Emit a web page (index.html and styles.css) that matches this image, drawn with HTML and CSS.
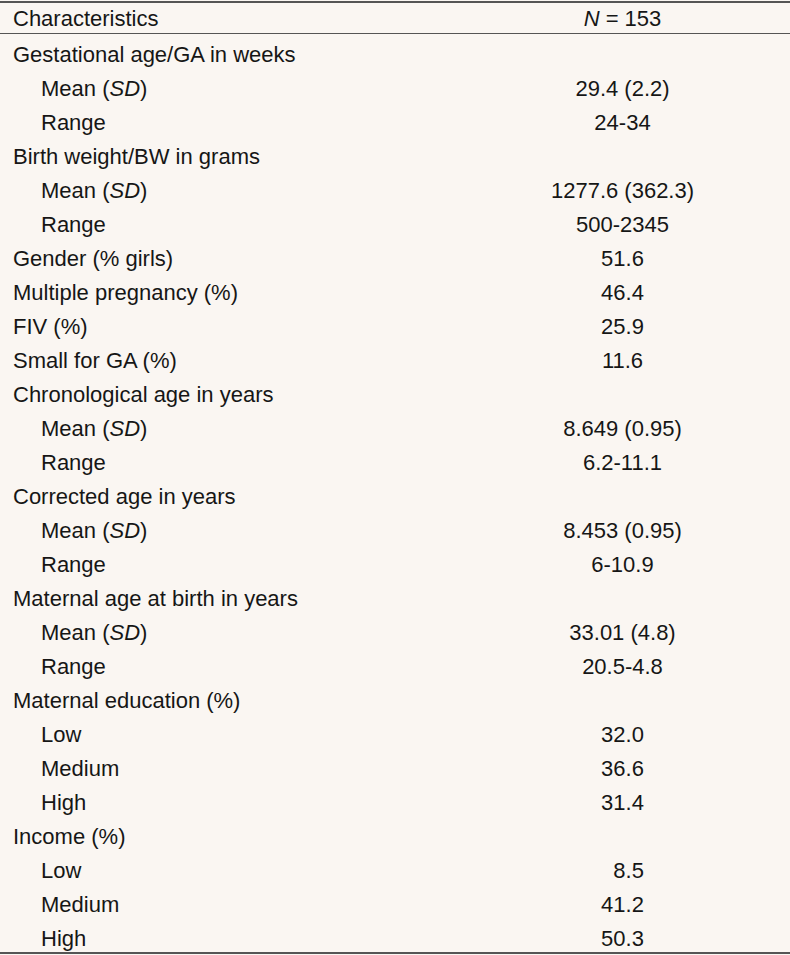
FILE: index.html
```html
<!DOCTYPE html>
<html lang="en">
<head>
<meta charset="utf-8">
<title>Characteristics</title>
<link rel="stylesheet" href="styles.css">
</head>
<body>
<table class="tbl">
  <thead>
    <tr><th class="c1">Characteristics</th><th class="c2"><i>N</i> = 153</th></tr>
  </thead>
  <tbody>
    <tr><td class="c1">Gestational age/GA in weeks</td><td class="c2"></td></tr>
    <tr><td class="c1 ind">Mean (<i>SD</i>)</td><td class="c2">29.4 (2.2)</td></tr>
    <tr><td class="c1 ind">Range</td><td class="c2">24-34</td></tr>
    <tr><td class="c1">Birth weight/BW in grams</td><td class="c2"></td></tr>
    <tr><td class="c1 ind">Mean (<i>SD</i>)</td><td class="c2">1277.6 (362.3)</td></tr>
    <tr><td class="c1 ind">Range</td><td class="c2">500-2345</td></tr>
    <tr><td class="c1">Gender (% girls)</td><td class="c2">51.6</td></tr>
    <tr><td class="c1">Multiple pregnancy (%)</td><td class="c2">46.4</td></tr>
    <tr><td class="c1">FIV (%)</td><td class="c2">25.9</td></tr>
    <tr><td class="c1">Small for GA (%)</td><td class="c2">11.6</td></tr>
    <tr><td class="c1">Chronological age in years</td><td class="c2"></td></tr>
    <tr><td class="c1 ind">Mean (<i>SD</i>)</td><td class="c2">8.649 (0.95)</td></tr>
    <tr><td class="c1 ind">Range</td><td class="c2">6.2-11.1</td></tr>
    <tr><td class="c1">Corrected age in years</td><td class="c2"></td></tr>
    <tr><td class="c1 ind">Mean (<i>SD</i>)</td><td class="c2">8.453 (0.95)</td></tr>
    <tr><td class="c1 ind">Range</td><td class="c2">6-10.9</td></tr>
    <tr><td class="c1">Maternal age at birth in years</td><td class="c2"></td></tr>
    <tr><td class="c1 ind">Mean (<i>SD</i>)</td><td class="c2">33.01 (4.8)</td></tr>
    <tr><td class="c1 ind">Range</td><td class="c2">20.5-4.8</td></tr>
    <tr><td class="c1">Maternal education (%)</td><td class="c2"></td></tr>
    <tr><td class="c1 ind">Low</td><td class="c2">32.0</td></tr>
    <tr><td class="c1 ind">Medium</td><td class="c2">36.6</td></tr>
    <tr><td class="c1 ind">High</td><td class="c2">31.4</td></tr>
    <tr><td class="c1">Income (%)</td><td class="c2"></td></tr>
    <tr><td class="c1 ind">Low</td><td class="c2">&#8199;8.5</td></tr>
    <tr><td class="c1 ind">Medium</td><td class="c2">41.2</td></tr>
    <tr><td class="c1 ind">High</td><td class="c2">50.3</td></tr>
  </tbody>
</table>
</body>
</html>
```
FILE: styles.css
```css
html, body {
  margin: 0;
  padding: 0;
  background: #faf6f2;
}
body {
  font-family: "Liberation Sans", Arial, sans-serif;
  font-size: 22px;
  color: #161616;
}
.tbl {
  width: 790px;
  border-collapse: collapse;
  table-layout: fixed;
  margin-top: 1px;
  border-top: 2px solid #555555;
  border-bottom: 2px solid #555555;
}
.tbl th,
.tbl td {
  box-sizing: border-box;
  font-weight: normal;
  padding-right: 0;
  padding-bottom: 0;
}
.tbl th {
  height: 30px;
  padding-top: 2px;
  line-height: 28px;
  border-bottom: 1px solid #555555;
}
.tbl td {
  height: 34px;
  padding-top: 7px;
  line-height: 27px;
}
.c1 {
  width: 455px;
  text-align: left;
  padding-left: 13px;
  white-space: nowrap;
}
.c1.ind {
  padding-left: 41px;
}
.c2 {
  text-align: center;
  padding-left: 0;
  white-space: nowrap;
}
```
